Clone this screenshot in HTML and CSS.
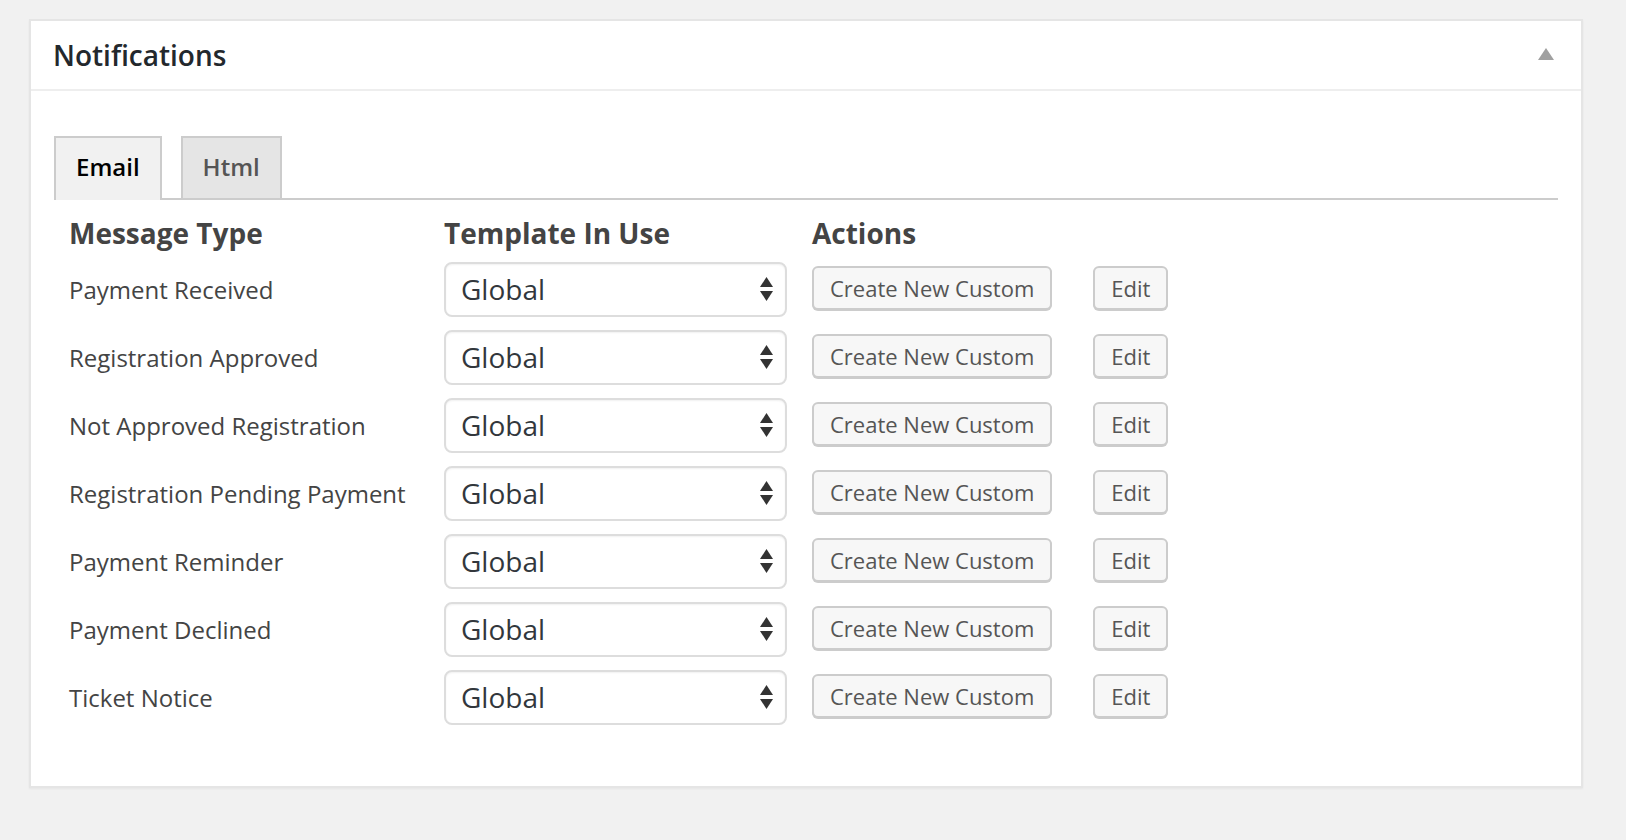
FILE: index.html
```html
<!DOCTYPE html>
<html lang="en">
<head>
<meta charset="utf-8">
<title>Notifications</title>
<link rel="stylesheet" href="styles.css">
</head>
<body>
<div class="postbox">
  <div class="postbox-header">
    <h2 class="postbox-title">Notifications</h2>
    <span class="toggle-indicator" aria-hidden="true">
      <svg width="16" height="12" viewBox="0 0 16 12"><polygon points="8,0 16,12 0,12" fill="#a0a0a0"/></svg>
    </span>
  </div>
  <div class="inside">
    <div class="tabs">
      <div class="tab tab-active">Email</div>
      <div class="tab">Html</div>
    </div>
    <div class="msg-table">
      <div class="row row-head">
        <div class="cell">Message Type</div>
        <div class="cell">Template In Use</div>
        <div class="cell">Actions</div>
      </div>

      <div class="row">
        <div class="cell label">Payment Received</div>
        <div class="cell"><div class="select"><span>Global</span><svg class="arrows" width="13" height="24" viewBox="0 0 13 24"><polygon points="6.5,0 13,10 0,10" fill="#333"/><polygon points="0,14 13,14 6.5,24" fill="#333"/></svg></div></div>
        <div class="cell actions"><button class="btn">Create New Custom</button><button class="btn">Edit</button></div>
      </div>

      <div class="row">
        <div class="cell label">Registration Approved</div>
        <div class="cell"><div class="select"><span>Global</span><svg class="arrows" width="13" height="24" viewBox="0 0 13 24"><polygon points="6.5,0 13,10 0,10" fill="#333"/><polygon points="0,14 13,14 6.5,24" fill="#333"/></svg></div></div>
        <div class="cell actions"><button class="btn">Create New Custom</button><button class="btn">Edit</button></div>
      </div>

      <div class="row">
        <div class="cell label">Not Approved Registration</div>
        <div class="cell"><div class="select"><span>Global</span><svg class="arrows" width="13" height="24" viewBox="0 0 13 24"><polygon points="6.5,0 13,10 0,10" fill="#333"/><polygon points="0,14 13,14 6.5,24" fill="#333"/></svg></div></div>
        <div class="cell actions"><button class="btn">Create New Custom</button><button class="btn">Edit</button></div>
      </div>

      <div class="row">
        <div class="cell label">Registration Pending Payment</div>
        <div class="cell"><div class="select"><span>Global</span><svg class="arrows" width="13" height="24" viewBox="0 0 13 24"><polygon points="6.5,0 13,10 0,10" fill="#333"/><polygon points="0,14 13,14 6.5,24" fill="#333"/></svg></div></div>
        <div class="cell actions"><button class="btn">Create New Custom</button><button class="btn">Edit</button></div>
      </div>

      <div class="row">
        <div class="cell label">Payment Reminder</div>
        <div class="cell"><div class="select"><span>Global</span><svg class="arrows" width="13" height="24" viewBox="0 0 13 24"><polygon points="6.5,0 13,10 0,10" fill="#333"/><polygon points="0,14 13,14 6.5,24" fill="#333"/></svg></div></div>
        <div class="cell actions"><button class="btn">Create New Custom</button><button class="btn">Edit</button></div>
      </div>

      <div class="row">
        <div class="cell label">Payment Declined</div>
        <div class="cell"><div class="select"><span>Global</span><svg class="arrows" width="13" height="24" viewBox="0 0 13 24"><polygon points="6.5,0 13,10 0,10" fill="#333"/><polygon points="0,14 13,14 6.5,24" fill="#333"/></svg></div></div>
        <div class="cell actions"><button class="btn">Create New Custom</button><button class="btn">Edit</button></div>
      </div>

      <div class="row">
        <div class="cell label">Ticket Notice</div>
        <div class="cell"><div class="select"><span>Global</span><svg class="arrows" width="13" height="24" viewBox="0 0 13 24"><polygon points="6.5,0 13,10 0,10" fill="#333"/><polygon points="0,14 13,14 6.5,24" fill="#333"/></svg></div></div>
        <div class="cell actions"><button class="btn">Create New Custom</button><button class="btn">Edit</button></div>
      </div>
    </div>
  </div>
</div>
</body>
</html>
```

FILE: styles.css
```css
* {
  box-sizing: border-box;
}

html, body {
  margin: 0;
  padding: 0;
  background: #f1f1f1;
  font-family: "Open Sans", "Liberation Sans", sans-serif;
}

body {
  padding: 19px 0 0 29px;
  height: 840px;
}

.postbox {
  width: 1554px;
  background: #fff;
  border: 2px solid #e5e5e5;
  box-shadow: 0 1px 2px rgba(0, 0, 0, 0.05);
}

.postbox-header {
  height: 70px;
  border-bottom: 2px solid #eee;
  display: flex;
  align-items: center;
  justify-content: space-between;
  padding: 2px 27px 0 22px;
}

.postbox-title {
  margin: 0;
  font-size: 28px;
  font-weight: 600;
  color: #23282d;
  line-height: 1.2;
}

.toggle-indicator {
  display: flex;
  width: 16px;
  height: 12px;
  margin-top: -4px;
}

.inside {
  padding: 45px 23px 55px 23px;
}

.tabs {
  display: flex;
  align-items: flex-end;
  gap: 19px;
  border-bottom: 2px solid #ccc;
  height: 64px;
}

.tab {
  height: 62px;
  border: 2px solid #ccc;
  border-bottom: 0;
  background: #e5e5e5;
  color: #555;
  font-size: 24px;
  font-weight: 600;
  padding: 0 20px 4px 20px;
  display: flex;
  align-items: center;
}

.tab-active {
  height: 64px;
  margin-bottom: -2px;
  padding-bottom: 6px;
  background: #f1f1f1;
  color: #000;
}

.msg-table {
  padding-left: 15px;
}

.row {
  display: grid;
  grid-template-columns: 375px 368px auto;
  align-items: center;
  height: 68px;
}

.row-head {
  height: 55px;
  align-items: start;
  padding-top: 16px;
  font-size: 28px;
  font-weight: 700;
  color: #444;
  line-height: 34px;
}

.label {
  font-size: 24px;
  color: #444;
}

.select {
  width: 343px;
  height: 55px;
  border: 2px solid #ddd;
  border-radius: 8px;
  background: #fff;
  box-shadow: inset 0 1px 2px rgba(0, 0, 0, 0.06);
  display: flex;
  align-items: center;
  justify-content: space-between;
  padding: 0 12px 0 15px;
  font-size: 28px;
  color: #32373c;
}

.arrows {
  display: block;
}

.actions {
  display: flex;
  gap: 41px;
  align-items: center;
}

.btn {
  height: 44px;
  margin-top: -2px;
  border: 2px solid #ccc;
  border-radius: 6px;
  background: #f7f7f7;
  box-shadow: 0 1px 0 #ccc;
  font-family: "Open Sans", "Liberation Sans", sans-serif;
  font-size: 22px;
  color: #555;
  padding: 0 16px;
  line-height: 1;
  cursor: pointer;
}
```
